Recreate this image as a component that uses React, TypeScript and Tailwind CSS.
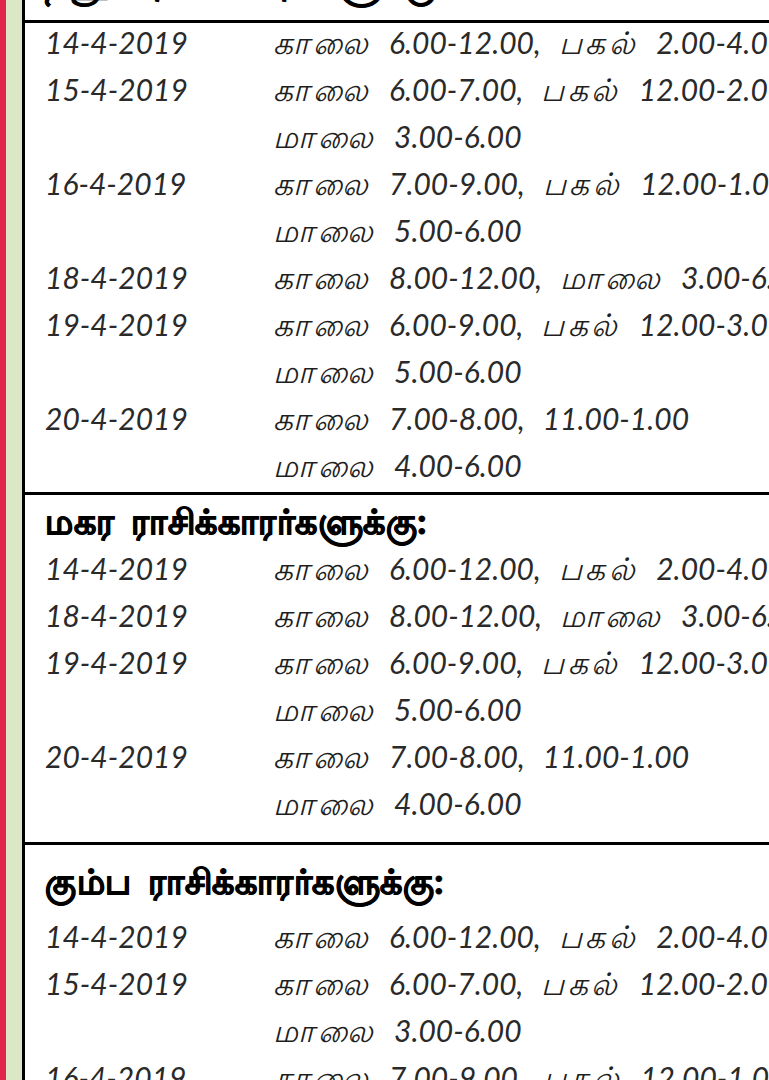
import React from 'react'

type Row = { date: string; lines: string[] }

const sec1: Row[] = [
  { date: '14-4-2019', lines: ['காலை 6.00-12.00, பகல் 2.00-4.00'] },
  { date: '15-4-2019', lines: ['காலை 6.00-7.00, பகல் 12.00-2.00', 'மாலை 3.00-6.00'] },
  { date: '16-4-2019', lines: ['காலை 7.00-9.00, பகல் 12.00-1.00', 'மாலை 5.00-6.00'] },
  { date: '18-4-2019', lines: ['காலை 8.00-12.00, மாலை 3.00-6.00'] },
  { date: '19-4-2019', lines: ['காலை 6.00-9.00, பகல் 12.00-3.00', 'மாலை 5.00-6.00'] },
  { date: '20-4-2019', lines: ['காலை 7.00-8.00, 11.00-1.00', 'மாலை 4.00-6.00'] },
]

const sec2: Row[] = [
  { date: '14-4-2019', lines: ['காலை 6.00-12.00, பகல் 2.00-4.00'] },
  { date: '18-4-2019', lines: ['காலை 8.00-12.00, மாலை 3.00-6.00'] },
  { date: '19-4-2019', lines: ['காலை 6.00-9.00, பகல் 12.00-3.00', 'மாலை 5.00-6.00'] },
  { date: '20-4-2019', lines: ['காலை 7.00-8.00, 11.00-1.00', 'மாலை 4.00-6.00'] },
]

const sec3: Row[] = [
  { date: '14-4-2019', lines: ['காலை 6.00-12.00, பகல் 2.00-4.00'] },
  { date: '15-4-2019', lines: ['காலை 6.00-7.00, பகல் 12.00-2.00', 'மாலை 3.00-6.00'] },
  { date: '16-4-2019', lines: ['காலை 7.00-9.00, பகல் 12.00-1.00', 'மாலை 5.00-6.00'] },
]

// Tamil words come out narrower than in the print, so they get a bit of tracking
function Line({ text }: { text: string }) {
  const parts = text.split(' ')
  return (
    <div className="flex gap-[18px] whitespace-nowrap">
      {parts.map((p, i) =>
        /[\u0B80-\u0BFF]/.test(p) ? (
          <span key={i} className="text-[31px] font-light tracking-[3.5px] text-[#1f1f1f]">{p}</span>
        ) : (
          <span key={i}>{p}</span>
        ),
      )}
    </div>
  )
}

function Rows({ rows }: { rows: Row[] }) {
  return (
    <div className="flex flex-col">
      {rows.map((r, i) => (
        <div key={i} className="flex">
          <div className="w-[228px] shrink-0">{r.date}</div>
          <div className="flex flex-col">
            {r.lines.map((l, j) => (
              <Line key={j} text={l} />
            ))}
          </div>
        </div>
      ))}
    </div>
  )
}

function Heading({ children }: { children: React.ReactNode }) {
  return (
    <div className="whitespace-nowrap text-[35px] font-black not-italic leading-[50px] tracking-[0.5px] text-black [-webkit-text-stroke:1px_black] [word-spacing:8px]">
      {children}
    </div>
  )
}

export default function App() {
  return (
    <div className="flex h-[1080px] w-[769px] overflow-hidden bg-white">
      <div className="w-[6px] shrink-0 bg-[#e0264c]" />
      <div className="w-[16px] shrink-0 bg-[#dce7c6]" />
      <div className="flex min-w-0 flex-1 flex-col border-l-[3px] border-black font-['Lato','Noto_Sans',sans-serif] text-[30px] font-normal italic leading-[47px] text-[#2a2a2a]">
        <div className="h-[23px] shrink-0 overflow-hidden border-b-[3px] border-black pl-[20px]">
          <div className="-mt-[44px]">
            <Heading>தனுசு ராசிக்காரர்களுக்கு:</Heading>
          </div>
        </div>
        <div className="-mt-[4px] shrink-0 border-b-[3px] border-black pb-[3px] pl-[20px]">
          <Rows rows={sec1} />
        </div>
        <div className="shrink-0 border-b-[3px] border-black pb-[15px] pl-[20px]">
          <Heading>மகர ராசிக்காரர்களுக்கு:</Heading>
          <Rows rows={sec2} />
        </div>
        <div className="shrink-0 pl-[20px] pt-[10px]">
          <div className="mb-[8px]">
            <Heading>கும்ப ராசிக்காரர்களுக்கு:</Heading>
          </div>
          <Rows rows={sec3} />
        </div>
      </div>
    </div>
  )
}
